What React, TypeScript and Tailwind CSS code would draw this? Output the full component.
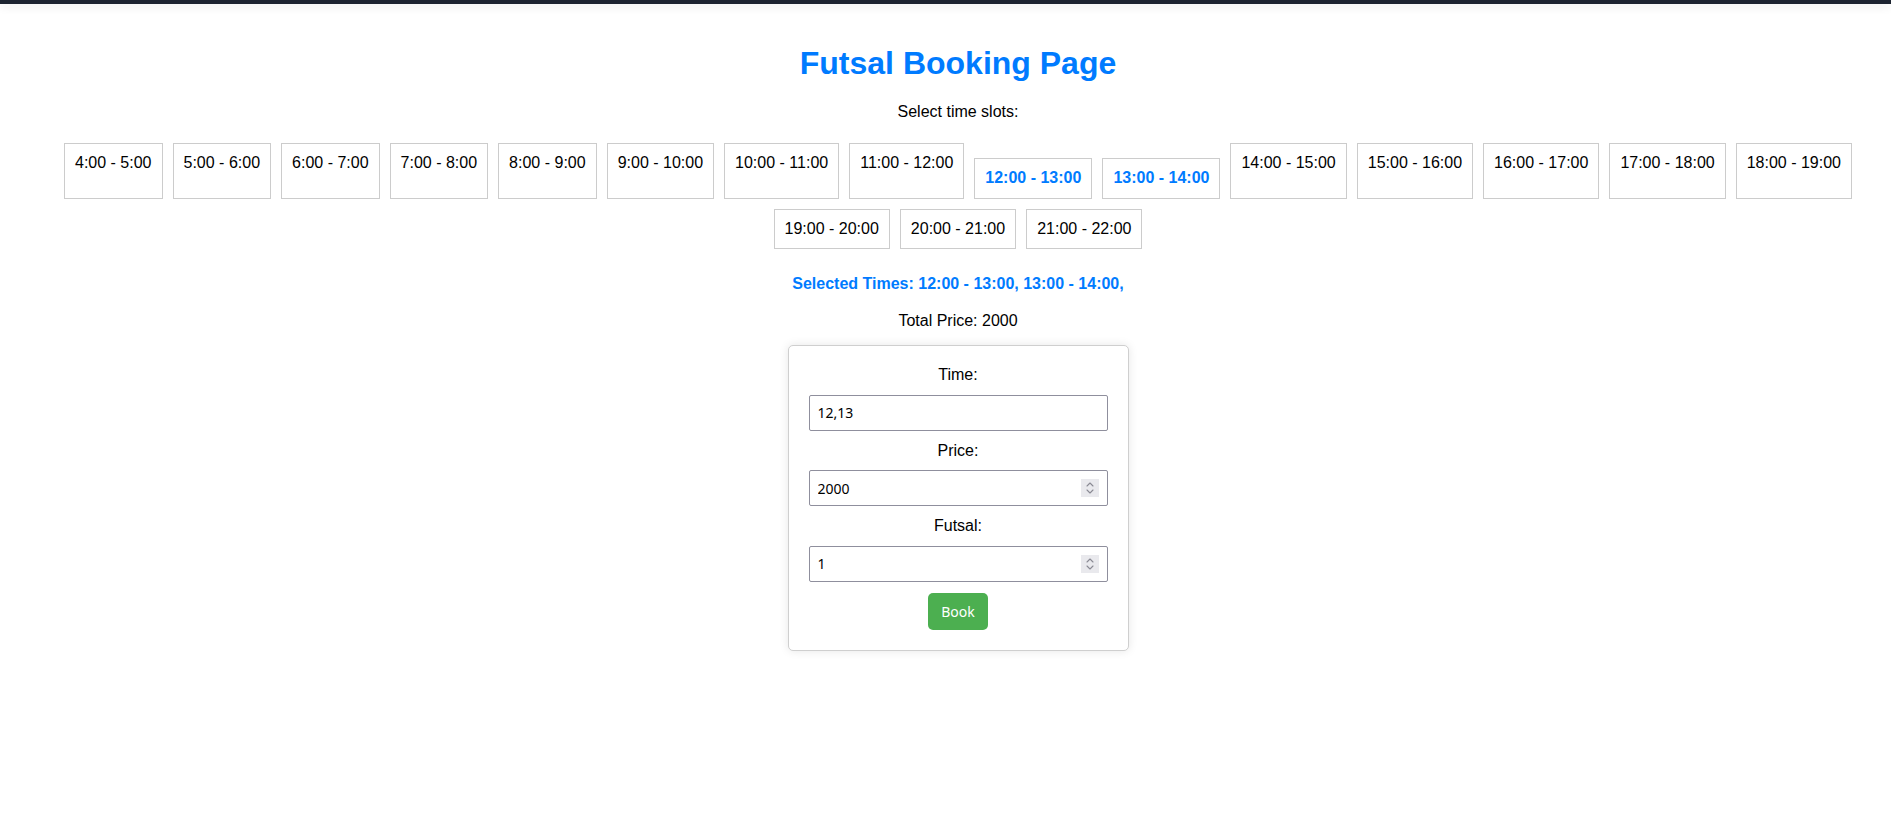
import { useState } from 'react';

const hours = Array.from({ length: 18 }, (_, i) => i + 4);
const PRICE_PER_SLOT = 1000;

const inputCls =
  "block w-full h-[36px] px-[8px] border border-[#8f8f9d] rounded-[2px] bg-white text-left text-[14px] font-['Noto_Sans',sans-serif] text-black [appearance:textfield] [&::-webkit-inner-spin-button]:appearance-none [&::-webkit-outer-spin-button]:appearance-none";

function Spinner() {
  return (
    <div className="absolute right-[9px] top-1/2 -translate-y-1/2 w-[18px] h-[18px] bg-[#e9e9ed] flex items-center justify-center pointer-events-none">
      <svg width="10" height="14" viewBox="0 0 10 14" fill="none" stroke="#8a8a94" strokeWidth="1.1" strokeLinecap="round" strokeLinejoin="round">
        <path d="M2 5 L5 2 L8 5" />
        <path d="M2 9 L5 12 L8 9" />
      </svg>
    </div>
  );
}

export default function App() {
  const [selected, setSelected] = useState<number[]>([12, 13]);
  const [futsal, setFutsal] = useState('1');

  const toggle = (h: number) =>
    setSelected(s => (s.includes(h) ? s.filter(x => x !== h) : [...s, h].sort((a, b) => a - b)));

  const total = selected.length * PRICE_PER_SLOT;

  return (
    <div className="min-h-screen bg-white text-black font-['Liberation_Sans',Arial,sans-serif]">
      {/* top bar */}
      <div className="h-[4px] bg-[#1c2330] shadow-[0_3px_9px_rgba(0,0,0,0.09)]" />

      <div className="pl-[25px] text-center">
        <h1 className="mt-[41px] mb-[21px] text-[32px] leading-[37px] font-bold text-[#007bff]">Futsal Booking Page</h1>
        <p className="text-[16px] leading-[18.4px] mb-[17px]">Select time slots:</p>

        <div className="flex flex-wrap justify-center">
          {hours.map(h => {
            const on = selected.includes(h);
            return (
              <div key={h} onClick={() => toggle(h)}
                className={`border border-[#ccc] bg-white px-[10px] py-[10px] text-[16px] leading-[18.4px] cursor-pointer ${
                  on ? 'mx-[5px] mb-[5px] mt-[20px] font-bold text-[#007bff]' : 'm-[5px]'
                }`}>
                {h}:00 - {h + 1}:00
              </div>
            );
          })}
        </div>

        <h4 className="mt-[21px] mb-[18px] text-[16px] leading-[18.4px] font-bold text-[#007bff]">
          Selected Times: {selected.map(h => `${h}:00 - ${h + 1}:00, `).join('')}
        </h4>
        <p className="text-[16px] leading-[18.4px] mb-[15px]">Total Price: {total}</p>

        {/* booking form */}
        <div className="mx-auto w-[341px] border border-[#cfcfcf] rounded-[5px] p-[20px] bg-white shadow-[0_0_10px_rgba(0,0,0,0.1)]">
          <label className="block text-[16px] leading-[18.4px] mb-[10.5px]">Time:</label>
          <input type="text" readOnly value={selected.join(',')} className={`${inputCls} mb-[11px]`} />

          <label className="block text-[16px] leading-[18.4px] mb-[10px]">Price:</label>
          <div className="relative mb-[11px]">
            <input type="number" readOnly value={total} className={inputCls} />
            <Spinner />
          </div>

          <label className="block text-[16px] leading-[18.4px] mb-[10px]">Futsal:</label>
          <div className="relative mb-[11px]">
            <input type="number" value={futsal} onChange={e => setFutsal(e.target.value)} className={inputCls} />
            <Spinner />
          </div>

          <button className="h-[37px] px-[13px] rounded-[5px] bg-[#4caf50] text-white text-[14px] font-['Noto_Sans',sans-serif] cursor-pointer">
            Book
          </button>
        </div>
      </div>
    </div>
  );
}
